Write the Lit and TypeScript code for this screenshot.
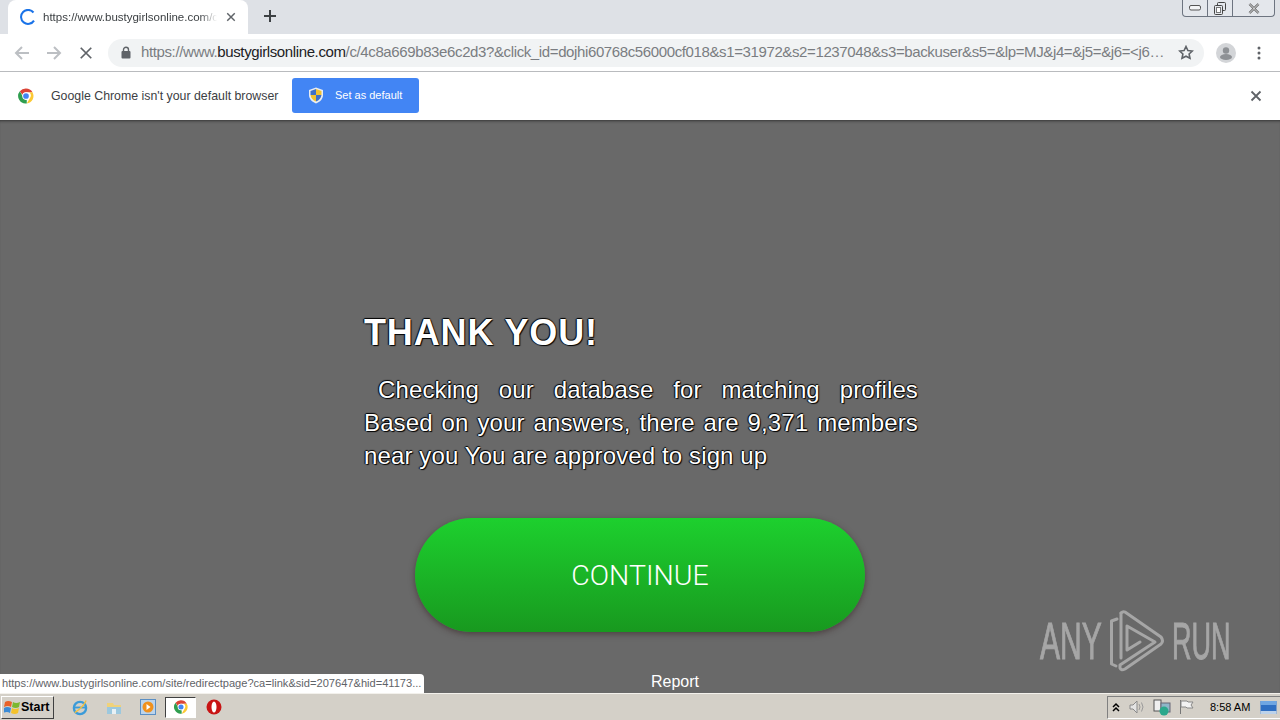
import { LitElement, html, css } from "lit";
import { customElement } from "lit/decorators.js";

const chromeLogo = (s: number) => html`<svg width=${s} height=${s} viewBox="0 0 48 48">
  <path d="M24 4a20 20 0 0 1 17.3 10H24a10 10 0 0 0-9.6 7.2L7.6 11.6A20 20 0 0 1 24 4z" fill="#db4437"/>
  <path d="M41.3 14A20 20 0 0 1 26 43.9l8.6-14.8A10 10 0 0 0 32 14z" fill="#fcc934"/>
  <path d="M26 43.9A20 20 0 0 1 7.6 11.6l8.6 14.9A10 10 0 0 0 26 34z" fill="#2f9e4f"/>
  <circle cx="24" cy="24" r="10" fill="#fff"/><circle cx="24" cy="24" r="7.6" fill="#4285f4"/>
</svg>`;

@customElement("app-root")
export class AppRoot extends LitElement {
  static styles = css`
    :host { display: block; width: 1280px; height: 720px; overflow: hidden; font-family: "Liberation Sans", Arial, sans-serif; }
    .root { display: flex; flex-direction: column; height: 720px; position: relative; }
    .tabstrip { height: 34px; background: #dee1e6; display: flex; align-items: flex-start; flex: none; }
    .tab { margin-left: 8px; width: 240px; height: 34px; background: #fff; border-radius: 8px 8px 0 0; display: flex; align-items: center; box-sizing: border-box; padding: 0 10px 1px 12px; flex: none; }
    .tab svg.spin { flex: none; }
    .tabtitle { font: 11.5px "Liberation Sans", sans-serif; color: #3c4043; margin-left: 7px; width: 174px; flex: none; overflow: hidden; white-space: nowrap; -webkit-mask-image: linear-gradient(90deg, #000 90%, transparent); mask-image: linear-gradient(90deg, #000 90%, transparent); }
    .tabx { margin-left: 9px; display: flex; }
    .plus { margin-left: 15px; margin-top: 9px; display: flex; }
    .spacer { flex: 1; }
    .winctl { display: flex; height: 16px; border: 1px solid #6d7480; border-top: none; border-radius: 0 0 4px 4px; background: #e4e7ec; margin-right: 5px; }
    .winctl div { display: flex; align-items: center; justify-content: center; border-right: 1px solid #6d7480; }
    .winctl div:last-child { border-right: none; }
    .w1 { width: 24px; }
    .w2 { width: 41px; }
    .toolbar { height: 37px; background: #fff; border-bottom: 1px solid #b9bbbe; display: flex; align-items: center; flex: none; }
    .nav { display: flex; width: 32px; justify-content: center; flex: none; }
    .nav.first { margin-left: 6px; }
    .omni { margin-left: 6px; width: 1096px; height: 28px; border-radius: 14px; background: #f1f3f4; display: flex; align-items: center; box-sizing: border-box; padding: 0 10px 0 13px; flex: none; }
    .url { font: 15px/18px "Liberation Sans", sans-serif; color: #7a7d81; margin-left: 10px; margin-top: -2px; width: 1024px; flex: none; white-space: nowrap; overflow: hidden; letter-spacing: -0.38px; }
    .url b { font-weight: normal; color: #202124; }
    .star { margin-left: 13px; flex: none; }
    .avatar { margin-left: 12px; display: flex; }
    .dots { margin-left: 21px; display: flex; }
    .infobar { height: 48px; background: #fff; display: flex; align-items: center; flex: none; box-sizing: border-box; padding-left: 17px; padding-right: 18px; }
    .infotxt { font: 12.35px "Liberation Sans", sans-serif; color: #3c4043; margin-left: 16px; width: 241px; white-space: nowrap; }
    .setbtn { height: 35px; width: 127px; background: #4285f4; border-radius: 3px; display: flex; align-items: center; color: #fff; font: 11px "Liberation Sans", sans-serif; box-sizing: border-box; padding-left: 16px; margin-top: -1px; }
    .setbtn span { margin-left: 11px; margin-top: -2px; }
    .page { flex: 1; background: #696969; position: relative; box-shadow: inset 0 3px 3px -2px #333; display: flex; flex-direction: column; min-height: 0; }
    .content { margin-left: 364px; width: 554px; padding-top: 191px; }
    h1 { margin: 0; font: bold 36px/44px "Liberation Sans", sans-serif; letter-spacing: .85px; color: #fff; text-shadow: 1px 1px 1px #000, -1px 0 1px #000, 0 -1px 1px #000; }
    p { margin: 18px 0 0; font: 24px/33px "Liberation Sans", sans-serif; letter-spacing: .12px; text-indent: 14px; color: #fff; text-align: justify; text-shadow: 1px 1px 1px #000, -1px 0 1px #000, 0 -1px 1px #000; }
    .cta { align-self: flex-start; margin: 46px 0 0 415px; width: 450px; height: 114px; border-radius: 57px; background: linear-gradient(#1dd02e, #18991f); color: #fff; font: 300 28.5px/115px Roboto, "Liberation Sans", sans-serif; text-align: center; box-shadow: 0 2px 6px rgba(50,30,30,.55); }
    .report { margin: 41px 0 0 651px; font: 16px/18px "Liberation Sans", sans-serif; color: #fff; }
    .status { position: absolute; left: 0; bottom: 0; width: 424px; height: 19px; background: #fff; border-radius: 0 4px 0 0; font: 11.1px/18px "Liberation Sans", sans-serif; color: #5f6368; padding-left: 2px; box-sizing: border-box; white-space: nowrap; overflow: hidden; }
    .mark { position: absolute; left: 1040px; bottom: 16px; display: flex; align-items: center; color: #a6a6a6; font: 51px/70px "Liberation Sans", sans-serif; -webkit-text-stroke: 1px #a6a6a6; }
    .mark span { display: block; transform-origin: left center; flex: none; margin-top: 2px; }
    .mark .any { transform: scaleX(.59); width: 60px; }
    .mark .run { transform: scaleX(.53); width: 60px; margin-left: -8px; }
    .mark svg { flex: none; }
    .taskbar { height: 27px; flex: none; background: #d4d0c8; border-top: 1px solid #f3f1ec; box-sizing: border-box; display: flex; align-items: center; }
    .start { width: 53px; height: 23px; margin-left: 1px; box-sizing: border-box; border: 1px solid; border-color: #fff #404040 #404040 #fff; display: flex; align-items: center; padding-left: 2px; font: bold 12.5px "Liberation Sans", sans-serif; color: #000; }
    .tasks { display: flex; align-items: center; margin-left: 18px; }
    .ti { width: 16px; height: 18px; display: flex; align-items: center; justify-content: center; margin-right: 18px; }
    .active { width: 31px; height: 21px; background: #fff; border: 1px solid; border-color: #404040 #fff #fff #404040; box-sizing: border-box; display: flex; align-items: center; justify-content: center; margin: 0 10px 0 -9px; }
    .tray { margin-left: auto; height: 23px; width: 176px; box-sizing: border-box; border: 1px solid; border-color: #808080 #fff #fff #808080; display: flex; align-items: center; padding-left: 3px; flex: none; margin-right: -3px; }
    .tray svg { flex: none; }
    .clock { font: 11px "Liberation Sans", sans-serif; color: #000; margin-left: 16px; }
    .ml7 { margin-left: 7px; }
    .ml8 { margin-left: 8px; }
    .ml10 { margin-left: 10px; }
  `;

  render() {
    const x = (s: number, c: string, w: number) => html`<svg width=${s} height=${s} viewBox="0 0 12 12"><path d="M1.500 1.500l9 9M10.500 1.500l-9 9" stroke=${c} stroke-width=${w} fill="none"/></svg>`;
    return html`<div class="root">
      <div class="tabstrip">
        <div class="tab">
          <svg class="spin" width="16" height="16" viewBox="0 0 16 16"><path d="M13.500 3.500A7 7 0 1 0 14 11.600" stroke="#1a73e8" stroke-width="2" fill="none"/></svg>
          <div class="tabtitle">https://www.bustygirlsonline.com/c/</div>
          <div class="tabx">${x(10, "#5f6368", 1.7)}</div>
        </div>
        <div class="plus"><svg width="14" height="14" viewBox="0 0 14 14"><path d="M7 1v12M1 7h12" stroke="#3c4043" stroke-width="2"/></svg></div>
        <div class="spacer"></div>
        <div class="winctl">
          <div class="w1"><svg width="14" height="8" viewBox="0 0 14 8"><rect x="1.500" y="1.500" width="11" height="4.500" rx="1.500" fill="#f4f5f7" stroke="#555"/></svg></div>
          <div class="w1"><svg width="14" height="13" viewBox="0 0 14 13"><rect x="4.500" y="0.500" width="8" height="8" rx="1" fill="none" stroke="#444"/><rect x="1.500" y="3.500" width="8" height="9" rx="1" fill="#e4e7ec" stroke="#444"/><rect x="3.500" y="5.500" width="4" height="5" fill="#fff" stroke="#777"/></svg></div>
          <div class="w2"><svg width="12" height="11" viewBox="0 0 12 11"><path d="M1.500 1L10.500 10M10.500 1L1.500 10" stroke="#555" stroke-width="2.400"/><path d="M1.500 1L10.500 10M10.500 1L1.500 10" stroke="#f0f1f3" stroke-width="1"/></svg></div>
        </div>
      </div>
      <div class="toolbar">
        <div class="nav first"><svg width="16" height="14" viewBox="0 0 16 14"><path d="M15 7H2M8 1L2 7l6 6" stroke="#bcbfc3" stroke-width="2" fill="none"/></svg></div>
        <div class="nav"><svg width="16" height="14" viewBox="0 0 16 14"><path d="M1 7h13M8 1l6 6-6 6" stroke="#bcbfc3" stroke-width="2" fill="none"/></svg></div>
        <div class="nav">${x(14, "#5f6368", 1.5)}</div>
        <div class="omni">
          <svg width="10" height="13" viewBox="0 0 10 13"><path d="M2.500 6V3.800a2.500 2.500 0 0 1 5 0V6" fill="none" stroke="#5f6368" stroke-width="1.400"/><rect x="0.500" y="5" width="9" height="7.500" rx="1" fill="#5f6368"/></svg>
          <div class="url">https://www.<b>bustygirlsonline.com</b>/c/4c8a669b83e6c2d3?&amp;click_id=dojhi60768c56000cf018&amp;s1=31972&amp;s2=1237048&amp;s3=backuser&amp;s5=&amp;lp=MJ&amp;j4=&amp;j5=&amp;j6=&lt;j6…</div>
          <svg class="star" width="16" height="15" viewBox="0 0 16 15"><path d="M8 1.500l1.900 4 4.400.5-3.200 3 .9 4.300L8 11.200l-4 2.100.9-4.300-3.200-3 4.400-.5z" fill="none" stroke="#5f6368" stroke-width="1.600"/></svg>
        </div>
        <div class="avatar"><svg width="20" height="20" viewBox="0 0 20 20"><circle cx="10" cy="10" r="10" fill="#d3d5d8"/><circle cx="10" cy="7.500" r="3.200" fill="#8e9195"/><ellipse cx="10" cy="14" rx="6" ry="3" fill="#8e9195"/></svg></div>
        <div class="dots"><svg width="4" height="14" viewBox="0 0 4 14"><circle cx="2" cy="2" r="1.500" fill="#5f6368"/><circle cx="2" cy="7" r="1.500" fill="#5f6368"/><circle cx="2" cy="12" r="1.500" fill="#5f6368"/></svg></div>
      </div>
      <div class="infobar">
        ${chromeLogo(18)}
        <div class="infotxt">Google Chrome isn't your default browser</div>
        <div class="setbtn">
          <svg width="16" height="17" viewBox="0 0 16 17"><path d="M8 .5l7 2.500v5c0 4-3 7-7 8.500C4 15 1 12 1 8V3z" fill="#e9edf2"/><path d="M8 2L2.500 4v4H8z" fill="#3f70c8"/><path d="M8 2l5.500 2v4H8z" fill="#f2c230"/><path d="M2.500 8H8v6.500C5 13.500 3 11 2.500 8z" fill="#f2c230"/><path d="M13.500 8H8v6.500c3-1 5-3.500 5.500-6.500z" fill="#3f70c8"/></svg>
          <span>Set as default</span>
        </div>
        <div class="spacer"></div>
        ${x(12, "#5f6368", 1.8)}
      </div>
      <div class="page">
        <div class="content">
          <h1>THANK YOU!</h1>
          <p>Checking our database for matching profiles Based on your answers, there are 9,371 members near you You are approved to sign up</p>
        </div>
        <div class="cta">CONTINUE</div>
        <div class="report">Report</div>
        <div class="status">https://www.bustygirlsonline.com/site/redirectpage?ca=link&amp;sid=207647&amp;hid=41173...</div>
        <div class="mark">
          <span class="any">ANY</span>
          <svg width="80" height="70" viewBox="0 0 80 70" fill="none" stroke="#a6a6a6" stroke-width="3" stroke-linejoin="round" stroke-linecap="round">
            <path d="M17 13L11.500 15V58L16 60"/>
            <path d="M21 7V52"/>
            <path d="M21 7Q23 5 25 6L61 31Q64 35 61 38L25 63Q21 65 20 62V59L55 36L27 20V44L40 36"/>
          </svg>
          <span class="run">RUN</span>
        </div>
      </div>
      <div class="taskbar">
        <div class="start">
          <svg width="17" height="16" viewBox="0 0 17 16"><path d="M1 3q3-2 7 0l-1 5q-3-2-7 0z" fill="#e8622a"/><path d="M9 3q3 2 7 0l-1 5q-3 2-7 0z" fill="#7cb82f"/><path d="M0 9q3-2 7 0l-1 5q-3-2-7 0z" fill="#3b8bd6"/><path d="M8 9q3 2 7 0l-1 5q-3 2-7 0z" fill="#f4c22b"/></svg>
          <span>Start</span>
        </div>
        <div class="tasks">
          <div class="ti"><svg width="17" height="17" viewBox="0 0 17 17"><circle cx="8.500" cy="9" r="6.500" fill="none" stroke="#3b9bd9" stroke-width="2.500"/><path d="M3 8.500h11" stroke="#3b9bd9" stroke-width="2"/><path d="M3 14Q12 8 15 1" stroke="#f0c040" stroke-width="1.500" fill="none"/></svg></div>
          <div class="ti"><svg width="16" height="15" viewBox="0 0 16 15"><path d="M1 3h6l1 2h7v9H1z" fill="#f0d27a"/><rect x="1" y="7" width="14" height="7" fill="#9cc8de"/><rect x="6" y="9" width="4" height="5" fill="#e8f0f4"/></svg></div>
          <div class="ti"><svg width="16" height="16" viewBox="0 0 16 16"><rect x=".5" y=".5" width="15" height="15" fill="#bcd4ec" stroke="#5b8fc4"/><circle cx="8" cy="8" r="5.500" fill="#f0911e"/><path d="M6.500 5l4 3-4 3z" fill="#fff"/></svg></div>
          <div class="active">${chromeLogo(16)}</div>
          <div class="ti"><svg width="16" height="16" viewBox="0 0 16 16"><circle cx="8" cy="8" r="7.500" fill="#c81414"/><ellipse cx="8" cy="8" rx="2.500" ry="5.500" fill="#fff"/></svg></div>
        </div>
        <div class="tray">
          <svg width="10" height="10" viewBox="0 0 10 10"><path d="M2 5l3-3 3 3M2 9l3-3 3 3" fill="none" stroke="#000" stroke-width="1.500"/></svg>
          <svg class="ml8" width="16" height="16" viewBox="0 0 16 16"><path d="M1 6h3l4-4v12l-4-4H1z" fill="#e4e4e4" stroke="#8a8a8a"/><path d="M10 5q2 3 0 6M12.500 3.500q3 4.500 0 9" fill="none" stroke="#9a9a9a"/></svg>
          <svg class="ml8" width="18" height="17" viewBox="0 0 18 17"><rect x="1" y="1" width="7" height="11" fill="#efefef" stroke="#555"/><rect x="8" y="4" width="9" height="9" fill="#8fb6c8" stroke="#667"/><circle cx="11" cy="12" r="4.500" fill="#2ba88c"/></svg>
          <svg class="ml7" width="16" height="16" viewBox="0 0 16 16"><path d="M2.500 1v14" stroke="#777"/><path d="M3 2h6l1 1h5l-2 3 2 3H9L8 8H3z" fill="#f2f2f2" stroke="#888"/></svg>
          <span class="clock">8:58 AM</span>
          <svg class="ml10" width="17" height="15" viewBox="0 0 17 15"><rect x=".5" y="1" width="16" height="13" fill="#2f6fc2"/><rect x=".5" y="1" width="16" height="4" fill="#6fa6e2"/><rect x=".5" y="11" width="16" height="3" fill="#bcd2ea"/></svg>
        </div>
      </div>
    </div>`;
  }
}
